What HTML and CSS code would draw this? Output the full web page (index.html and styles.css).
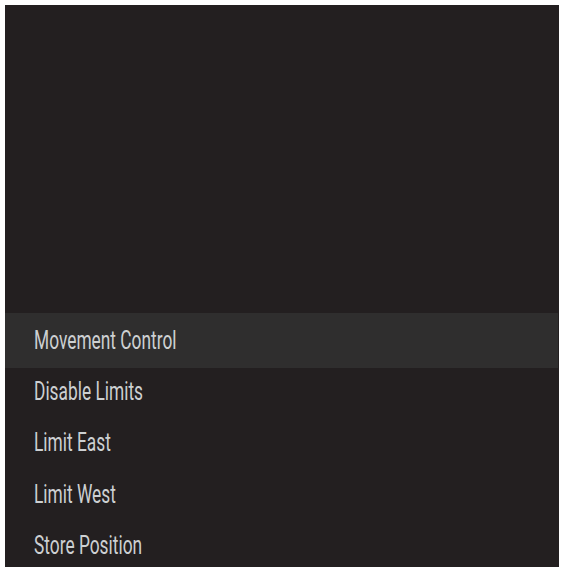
FILE: index.html
```html
<!DOCTYPE html>
<html>
<head>
<meta charset="utf-8">
<link rel="stylesheet" href="styles.css">
</head>
<body>
<div class="panel">
  <ul class="menu">
    <li class="item active"><span class="label">Movement Control</span></li>
    <li class="item"><span class="label">Disable Limits</span></li>
    <li class="item"><span class="label">Limit East</span></li>
    <li class="item"><span class="label">Limit West</span></li>
    <li class="item"><span class="label">Store Position</span></li>
  </ul>
</div>
</body>
</html>
```
FILE: styles.css
```css
html, body {
  margin: 0;
  padding: 0;
  background: #ffffff;
}
.panel {
  margin: 5px 0 0 5px;
  width: 554px;
  height: 562px;
  background: #231f20;
  overflow: hidden;
  padding-top: 310px;
  box-sizing: border-box;
}
.menu {
  list-style: none;
  margin: 0;
  padding: 0;
}
.item {
  height: 51.3px;
  display: flex;
  align-items: center;
  padding-left: 29px;
  font-family: Roboto, "Liberation Sans", sans-serif;
  font-weight: 400;
  font-size: 25.5px;
  color: #cdd0d2;
  white-space: nowrap;
}
.label {
  display: inline-block;
  transform: scaleX(0.68);
  transform-origin: left center;
  margin-top: -2px;
}
.active {
  background: #2f2e2e;
  box-shadow: 0 -2px 0 #2f2e2e, 0 2px 0 #2f2e2e;
  margin-left: -1px;
  margin-right: 1px;
  padding-left: 30px;
}
```
